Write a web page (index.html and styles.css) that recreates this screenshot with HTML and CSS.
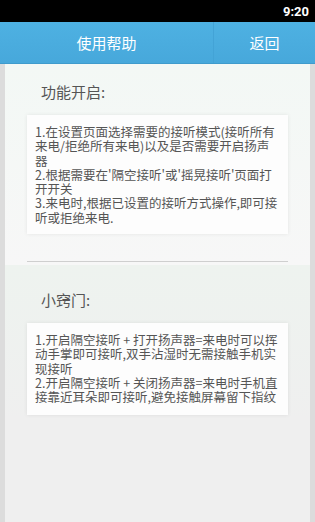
FILE: index.html
```html
<!DOCTYPE html>
<html lang="zh-CN">
<head>
  <meta charset="UTF-8">
  <title>使用帮助</title>
  <link rel="stylesheet" href="styles.css">
</head>
<body>
  <div class="status-bar"><span class="clock">9:20</span></div>

  <div class="title-bar">
    <div class="title">使用帮助</div>
    <div class="back-btn">返回</div>
  </div>

  <div class="page">
    <div class="section section-top">
      <div class="section-title">功能开启:</div>
      <div class="tip-box">
        <div>1.在设置页面选择需要的接听模式(接听所有来电/拒绝所有来电)以及是否需要开启扬声器</div>
        <div>2.根据需要在'隔空接听'或'摇晃接听'页面打开开关</div>
        <div>3.来电时,根据已设置的接听方式操作,即可接听或拒绝来电.</div>
      </div>
      <div class="divider"></div>
    </div>

    <div class="section section-bottom">
      <div class="section-title">小窍门:</div>
      <div class="tip-box">
        <div>1.开启隔空接听 + 打开扬声器=来电时可以挥动手掌即可接听,双手沾湿时无需接触手机实现接听</div>
        <div>2.开启隔空接听 + 关闭扬声器=来电时手机直接靠近耳朵即可接听,避免接触屏幕留下指纹</div>
      </div>
    </div>
  </div>
</body>
</html>
```

FILE: styles.css
```css
body { margin: 0; font-family: "Noto Sans CJK SC", "Noto Sans", sans-serif; background: #efefef; }

.status-bar {
  height: 22px;
  background: #000;
  display: flex;
  justify-content: flex-end;
  align-items: center;
  padding-right: 6px;
}
.clock { color: #fff; font: bold 13px "Roboto", "DejaVu Sans", sans-serif; }

.title-bar {
  height: 41px;
  display: flex;
  background: linear-gradient(#4eb1e2, #47a8db);
  border-bottom: 1px solid #3f9bcc;
  color: #fff;
  font-size: 15px;
}
.title { flex: 1; display: flex; align-items: center; justify-content: center; }
.back-btn {
  width: 101px;
  border-left: 1px solid #43a3d6;
  display: flex;
  align-items: center;
  justify-content: center;
}

.page {
  height: 458px;
  border-left: 5px solid #dcdcdc;
  border-right: 5px solid #dcdcdc;
  background: #efefef;
}

.section { padding: 0 22px; }
.section-top {
  padding-top: 18px;
  padding-bottom: 3px;
  background: linear-gradient(#f3f8f5, #f7f7f7);
}
.section-bottom {
  padding-top: 25px;
  background: linear-gradient(#eef3ef, #efefef 160px);
}

.section-title {
  color: #555;
  font-size: 15px;
  line-height: 20px;
  padding-left: 14px;
  margin-bottom: 13px;
}

.tip-box {
  background: #fdfdfd;
  box-shadow: 0 0 4px rgba(0, 0, 0, 0.08);
  color: #555;
  font-size: 12.5px;
  line-height: 14.3px;
  padding: 10px 8px 9px 8px;
}

.section-bottom .tip-box { padding-bottom: 10px; }

.divider {
  margin-top: 27px;
  height: 1px;
  background: #cfcfcf;
}
```
